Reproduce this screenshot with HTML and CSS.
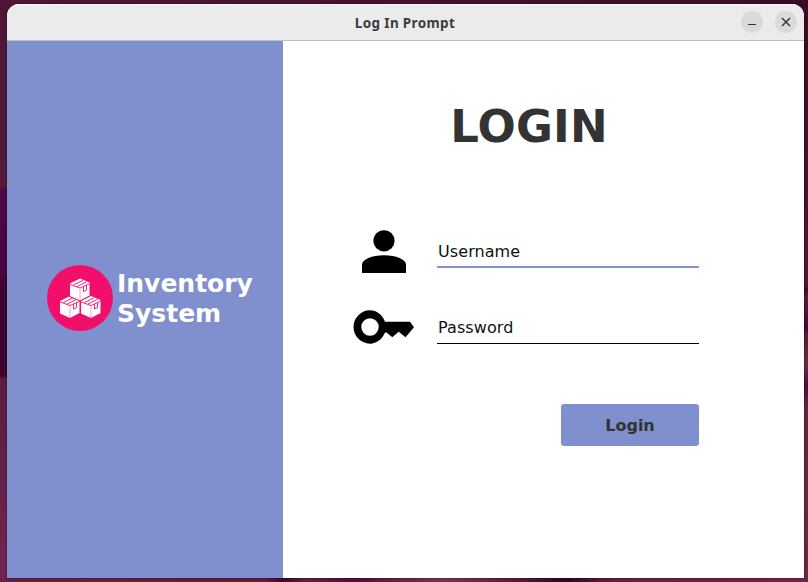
FILE: index.html
```html
<!DOCTYPE html>
<html lang="en">
<head>
<meta charset="utf-8">
<title>Log In Prompt</title>
<link rel="stylesheet" href="styles.css">
</head>
<body>
<div class="window">
  <header class="titlebar">
    <h1 class="title">Log In Prompt</h1>
    <div class="controls">
      <button class="control" aria-label="Minimize"><svg width="22" height="22" viewBox="0 0 22 22"><path d="M7 13.5h8" stroke="#333" fill="none"/></svg></button>
      <button class="control" aria-label="Close"><svg width="22" height="22" viewBox="0 0 22 22"><path d="M7 7l8 8M15 7l-8 8" stroke="#333" stroke-width="1.4" fill="none"/></svg></button>
    </div>
  </header>
  <div class="content">
    <aside class="brand">
      <svg class="logo" width="66" height="66" viewBox="0 0 66 66">
        <defs>
          <g id="box">
            <path d="M0 5L10 0L19.500 4V17L10 22L0 17.500Z" fill="#fff" stroke="#f20f6c" stroke-width="2" paint-order="stroke"/>
            <path d="M0 6L10 9.500L19.500 5.300M3.500 6.500L13 1.800M7 8L16.500 3.300M13.500 8.300V13L16.500 11.500V6.800" fill="none" stroke="#f20f6c" stroke-width=".9"/>
            <path d="M10 10V22" stroke="#f20f6c" stroke-width=".4"/>
          </g>
        </defs>
        <circle cx="33" cy="33" r="33" fill="#f20f6c"/>
        <use href="#box" x="13" y="31"/>
        <use href="#box" x="34" y="31"/>
        <use href="#box" x="23" y="13.500"/>
      </svg>
      <div class="brand-name">Inventory<br>System</div>
    </aside>
    <main class="login">
      <h2 class="heading">LOGIN</h2>
      <div class="field">
        <svg class="icon" width="62" height="48" viewBox="0 0 62 48"><circle cx="31" cy="12.800" r="10.600"/><path d="M9 45V36.500C9 31.500 19 27.200 31 27.200S53 31.500 53 36.500V45Z"/></svg>
        <div class="input focused">Username</div>
      </div>
      <div class="field">
        <svg class="icon" width="62" height="48" viewBox="0 0 62 48"><path fill-rule="evenodd" d="M17 6.300C23.500 6.300 29.500 11 32 17.700H57L61 23.300L52.500 33.200L45.700 27.800L39.300 33.200L33.500 28.500H32C29.500 35 23.500 39.700 17 39.700C8 39.700 .5 32 .5 23S8 6.300 17 6.300ZM17 14.300A8.700 8.700 0 1 0 17 31.700A8.700 8.700 0 1 0 17 14.300Z"/></svg>
        <div class="input">Password</div>
      </div>
      <button class="submit">Login</button>
    </main>
  </div>
</div>
</body>
</html>
```
FILE: styles.css
```css
* { box-sizing: border-box; }
body {
  margin: 0;
  width: 808px;
  height: 582px;
  padding: 4px 4px 4px 7px;
  overflow: hidden;
  font-family: "DejaVu Sans", sans-serif;
  background:
    linear-gradient(to right, #672243 0%, #5d1b3e 33%, #3d0930 35%, #602140 38%, #4a0e40 44%, #602140 48%, #733456 55%, #602140 62%, #340426 70%, #66203d 76%, #762042 100%) 0 100% / 100% 4px no-repeat,
    linear-gradient(#4d1637 0, #521b3b 188px, #500646 189px, #4a0441 276px, #3b042e 277px, #3b042e 376px, #5a1d3f 378px, #732450 582px) 0 0 / 7px 100% no-repeat,
    linear-gradient(#390b26 0, #4d1637 285px, #3d0930 290px, #571b3c 297px, #45093a 328px, #571b3c 335px, #6b2a4a 365px, #4d0e3f 385px, #662244 410px, #732441 582px) 100% 0 / 4px 100% no-repeat,
    linear-gradient(to right, #4d1637, #47112f 50%, #390b26);
}
.window {
  display: flex;
  flex-direction: column;
  height: 574px;
  border-radius: 12px 12px 0 0;
  overflow: hidden;
  background: #fff;
  box-shadow: 0 0 2px rgba(0, 0, 0, .65);
}
.titlebar {
  display: grid;
  grid-template-columns: 1fr auto 1fr;
  align-items: center;
  flex: none;
  height: 37px;
  padding-right: 7px;
  background: #ebebeb;
  border-bottom: 1px solid #bfbfbf;
  box-shadow: inset 0 1px #fafafa;
}
.title {
  grid-column: 2;
  margin: 2px 0 0 6px;
  font: bold 13.500px/20px "Noto Sans", sans-serif;
  letter-spacing: .35px;
  color: #3d3d3d;
}
.controls { display: flex; justify-content: flex-end; gap: 12px; }
.control {
  display: block;
  width: 22px;
  height: 22px;
  padding: 0;
  border: 0;
  border-radius: 50%;
  background: #dadada;
}
.control svg { display: block; }
.content { display: flex; flex: 1; }
.brand {
  display: flex;
  align-items: center;
  width: 276px;
  padding: 0 0 23px 40px;
  background: #8090ce;
}
.logo { flex: none; }
.brand-name {
  margin: 2px 0 0 4px;
  font-weight: bold;
  font-size: 25px;
  line-height: 30px;
  color: #fff;
}
.login {
  display: flex;
  flex-direction: column;
  flex: 1;
  padding: 58px 105px 0 70px;
}
.heading {
  align-self: center;
  margin: 0 0 72px 6px;
  font-size: 45px;
  line-height: 56px;
  letter-spacing: .2px;
  color: #333;
}
.field {
  display: flex;
  align-items: flex-start;
  justify-content: space-between;
  height: 76px;
}
.icon { flex: none; margin-top: 1px; }
.input {
  width: 262px;
  height: 40px;
  margin-top: 1px;
  padding: 14px 1px 0;
  font-size: 16px;
  line-height: 20px;
  letter-spacing: .08px;
  color: #111;
  border-bottom: 1px solid #000;
}
.input.focused { border-bottom: 2px solid #8090ce; }
.submit {
  align-self: flex-end;
  width: 138px;
  height: 42px;
  margin-top: 25px;
  padding: 0;
  border: 0;
  border-radius: 3px;
  background: #8090ce;
  color: #333;
  font: bold 16px "DejaVu Sans", sans-serif;
}
```
